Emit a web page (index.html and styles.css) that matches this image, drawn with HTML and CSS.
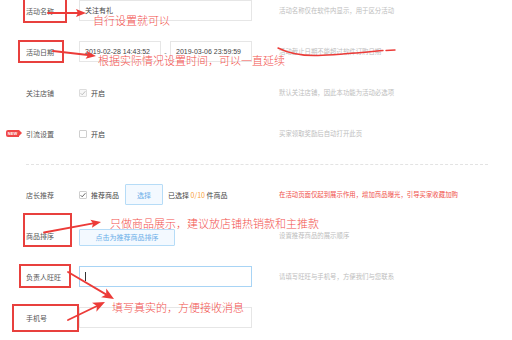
FILE: index.html
```html
<!DOCTYPE html>
<html lang="zh">
<head>
<meta charset="utf-8">
<link rel="stylesheet" href="styles.css">
</head>
<body>
<div class="page">
  <div class="form">
    <div class="row">
      <div class="label">活动名称</div>
      <div class="ctrl"><div class="input">关注有礼</div></div>
      <div class="hint">活动名称仅在软件内显示，用于区分活动</div>
    </div>
    <div class="row">
      <div class="label">活动日期</div>
      <div class="ctrl dates">
        <div class="input date">2019-02-28 14:43:52</div>
        <span class="dash">-</span>
        <div class="input date">2019-03-06 23:59:59</div>
      </div>
      <div class="hint">活动截止日期不能超过软件订购日期</div>
    </div>
    <div class="row">
      <div class="label">关注店铺</div>
      <div class="ctrl"><span class="cb disabled"><svg viewBox="0 0 8 8"><path d="M1.6 4.2 L3.2 5.8 L6.4 2.2" /></svg></span><span class="cbtext">开启</span></div>
      <div class="hint">默认关注店铺，因此本功能为活动必选项</div>
    </div>
    <div class="row">
      <div class="label"><span class="new">NEW</span>引流设置</div>
      <div class="ctrl"><span class="cb"></span><span class="cbtext">开启</span></div>
      <div class="hint">买家领取奖励后自动打开此页</div>
    </div>
    <div class="divider"></div>
    <div class="row">
      <div class="label">店长推荐</div>
      <div class="ctrl"><span class="cb on"><svg viewBox="0 0 8 8"><path d="M1.6 4.2 L3.2 5.8 L6.4 2.2" /></svg></span><span class="cbtext">推荐商品</span><span class="btn pick">选择</span><span class="picked">已选择 <b>0/10</b> 件商品</span></div>
      <div class="hint red">在活动页面仅起到展示作用，增加商品曝光，引导买家收藏加购</div>
    </div>
    <div class="row">
      <div class="label">商品排序</div>
      <div class="ctrl"><span class="btn sort">点击为推荐商品排序</span></div>
      <div class="hint">设置推荐商品的展示顺序</div>
    </div>
    <div class="row">
      <div class="label">负责人旺旺</div>
      <div class="ctrl"><div class="input focus"><span class="caret"></span></div></div>
      <div class="hint">请填写旺旺与手机号，方便我们与您联系</div>
    </div>
    <div class="row">
      <div class="label">手机号</div>
      <div class="ctrl"><div class="input"></div></div>
      <div class="hint"></div>
    </div>
  </div>

  <div class="box b1"></div>
  <div class="box b2"></div>
  <div class="box b3"></div>
  <div class="box b4"></div>
  <div class="box b5"></div>

  <svg class="marks" width="512" height="340" viewBox="0 0 512 340">
    <g class="arrow">
      <line x1="48" y1="13" x2="78" y2="13"/>
      <polygon points="86,13 76,9 78,13 76,17"/>
      <line x1="53" y1="51" x2="88" y2="55"/>
      <polygon points="96,56 85.6,58.8 88.1,55.1 86.5,50.9"/>
      <line x1="44" y1="232.5" x2="93" y2="223.4"/>
      <polygon points="101,222 91.9,227.7 93.1,223.4 90.4,219.8"/>
      <line x1="68" y1="272" x2="106" y2="294.4"/>
      <polygon points="114,299 101.1,297.2 106.2,294.4 106.2,288.6"/>
      <line x1="68" y1="320" x2="97" y2="306"/>
      <polygon points="105,302 96.4,311.8 96.9,305.9 92,302.8"/>
    </g>
    <path class="wave" d="M278 48 C 288 53, 300 56, 318 55.5 S 356 53, 383 50.5"/>
    <path class="wave" d="M386 50.5 L 395 50"/>
  </svg>

  <div class="note n1">自行设置就可以</div>
  <div class="note n2">根据实际情况设置时间，可以一直延续</div>
  <div class="note n3">只做商品展示，建议放店铺热销款和主推款</div>
  <div class="note n4">填写真实的，方便接收消息</div>
</div>
</body>
</html>
```

FILE: styles.css
```css
* { box-sizing: border-box; }
html, body { margin: 0; padding: 0; background: #fff; }
body {
  width: 512px;
  height: 340px;
  overflow: hidden;
  font-family: "Noto Sans CJK SC", "Liberation Sans", sans-serif;
  color: #555;
}
.page {
  position: relative;
  width: 512px;
  height: 340px;
  overflow: hidden;
}
.form {
  margin-top: -10px;
  display: flex;
  flex-direction: column;
}
.row {
  display: grid;
  grid-template-columns: 53px 200px 1fr;
  align-items: center;
  height: 41px;
  padding-left: 26px;
}
.label {
  position: relative;
  font-size: 7px;
  line-height: 10px;
  color: #555;
  white-space: nowrap;
}
.ctrl {
  display: flex;
  align-items: center;
  font-size: 7px;
  line-height: 10px;
  color: #444;
  white-space: nowrap;
}
.hint {
  font-size: 6.4px;
  line-height: 9px;
  color: #bdbdbd;
  white-space: nowrap;
}
.hint.red { color: #f0504a; }
.input {
  width: 173px;
  height: 21px;
  border: 1px solid #e6e6e6;
  display: flex;
  align-items: center;
  padding-left: 5px;
  font-size: 7px;
  color: #444;
  font-family: "Liberation Sans", "Noto Sans CJK SC", sans-serif;
}
.input.date { width: 82px; }
.dash {
  width: 9px;
  text-align: center;
  color: #666;
  font-size: 7px;
}
.input.focus { border-color: #a8d4f5; }
.caret {
  display: block;
  width: 1px;
  height: 9px;
  background: #333;
}
.cb {
  width: 8px;
  height: 8px;
  border: 1px solid #cfcfcf;
  border-radius: 1px;
  background: #fff;
  display: flex;
  margin-right: 4px;
}
.cb svg { width: 8px; height: 8px; margin: -1px; }
.cb path { fill: none; stroke: #555; stroke-width: 0.9; }
.cb.disabled { background: #f7f7f7; border-color: #dcdcdc; }
.cb.disabled path { stroke: #b8b8b8; }
.cbtext { color: #444; }
.btn {
  display: flex;
  align-items: center;
  justify-content: center;
  background: #f3f9ff;
  border: 1px solid #b6dcf7;
  color: #6aaee8;
  border-radius: 1px;
}
.btn.pick {
  width: 38px;
  height: 21px;
  margin-left: 6px;
}
.btn.sort {
  width: 96px;
  height: 17px;
  margin-top: 3px;
}
.picked { margin-left: 5px; color: #444; }
.picked b { font-weight: normal; color: #f7a13a; }
.divider {
  margin: 10px 0 9px 26px;
  width: 462px;
  border-top: 1px dashed #e3e3e3;
}
.new {
  position: absolute;
  left: -20px;
  top: 50%;
  margin-top: -3.5px;
  width: 13px;
  height: 7px;
  background: #ef4747;
  border-radius: 2px 0 0 2px;
  color: #fff;
  font-family: "Liberation Sans", sans-serif;
  font-weight: bold;
  font-size: 4px;
  line-height: 7px;
  text-align: center;
}
.new::after {
  content: "";
  position: absolute;
  right: -3px;
  top: 0;
  border-left: 3px solid #ef4747;
  border-top: 3.5px solid transparent;
  border-bottom: 3.5px solid transparent;
}
.box {
  position: absolute;
  border: 2px solid #e8403d;
}
.b1 { left: 23px; top: -2px; width: 44px; height: 25px; }
.b2 { left: 18px; top: 40px; width: 46px; height: 23px; }
.b3 { left: 23px; top: 213px; width: 49px; height: 34px; }
.b4 { left: 19px; top: 264px; width: 52px; height: 24px; }
.b5 { left: 12px; top: 304px; width: 67px; height: 28px; }
.marks {
  position: absolute;
  left: 0;
  top: 0;
  pointer-events: none;
}
.arrow line { stroke: #ec3b38; stroke-width: 1.8; stroke-linecap: round; }
.arrow polygon { fill: #ec3b38; }
.wave { fill: none; stroke: #ec3b38; stroke-width: 1.4; stroke-linecap: round; }
.note {
  position: absolute;
  font-size: 11px;
  line-height: 14px;
  color: #f2504c;
  white-space: nowrap;
  font-family: "Noto Sans CJK SC", sans-serif;
  font-weight: 300;
}
.n1 { left: 93px; top: 13px; }
.n2 { left: 98px; top: 53px; }
.n3 { left: 110px; top: 216px; }
.n4 { left: 112px; top: 300px; }
```
